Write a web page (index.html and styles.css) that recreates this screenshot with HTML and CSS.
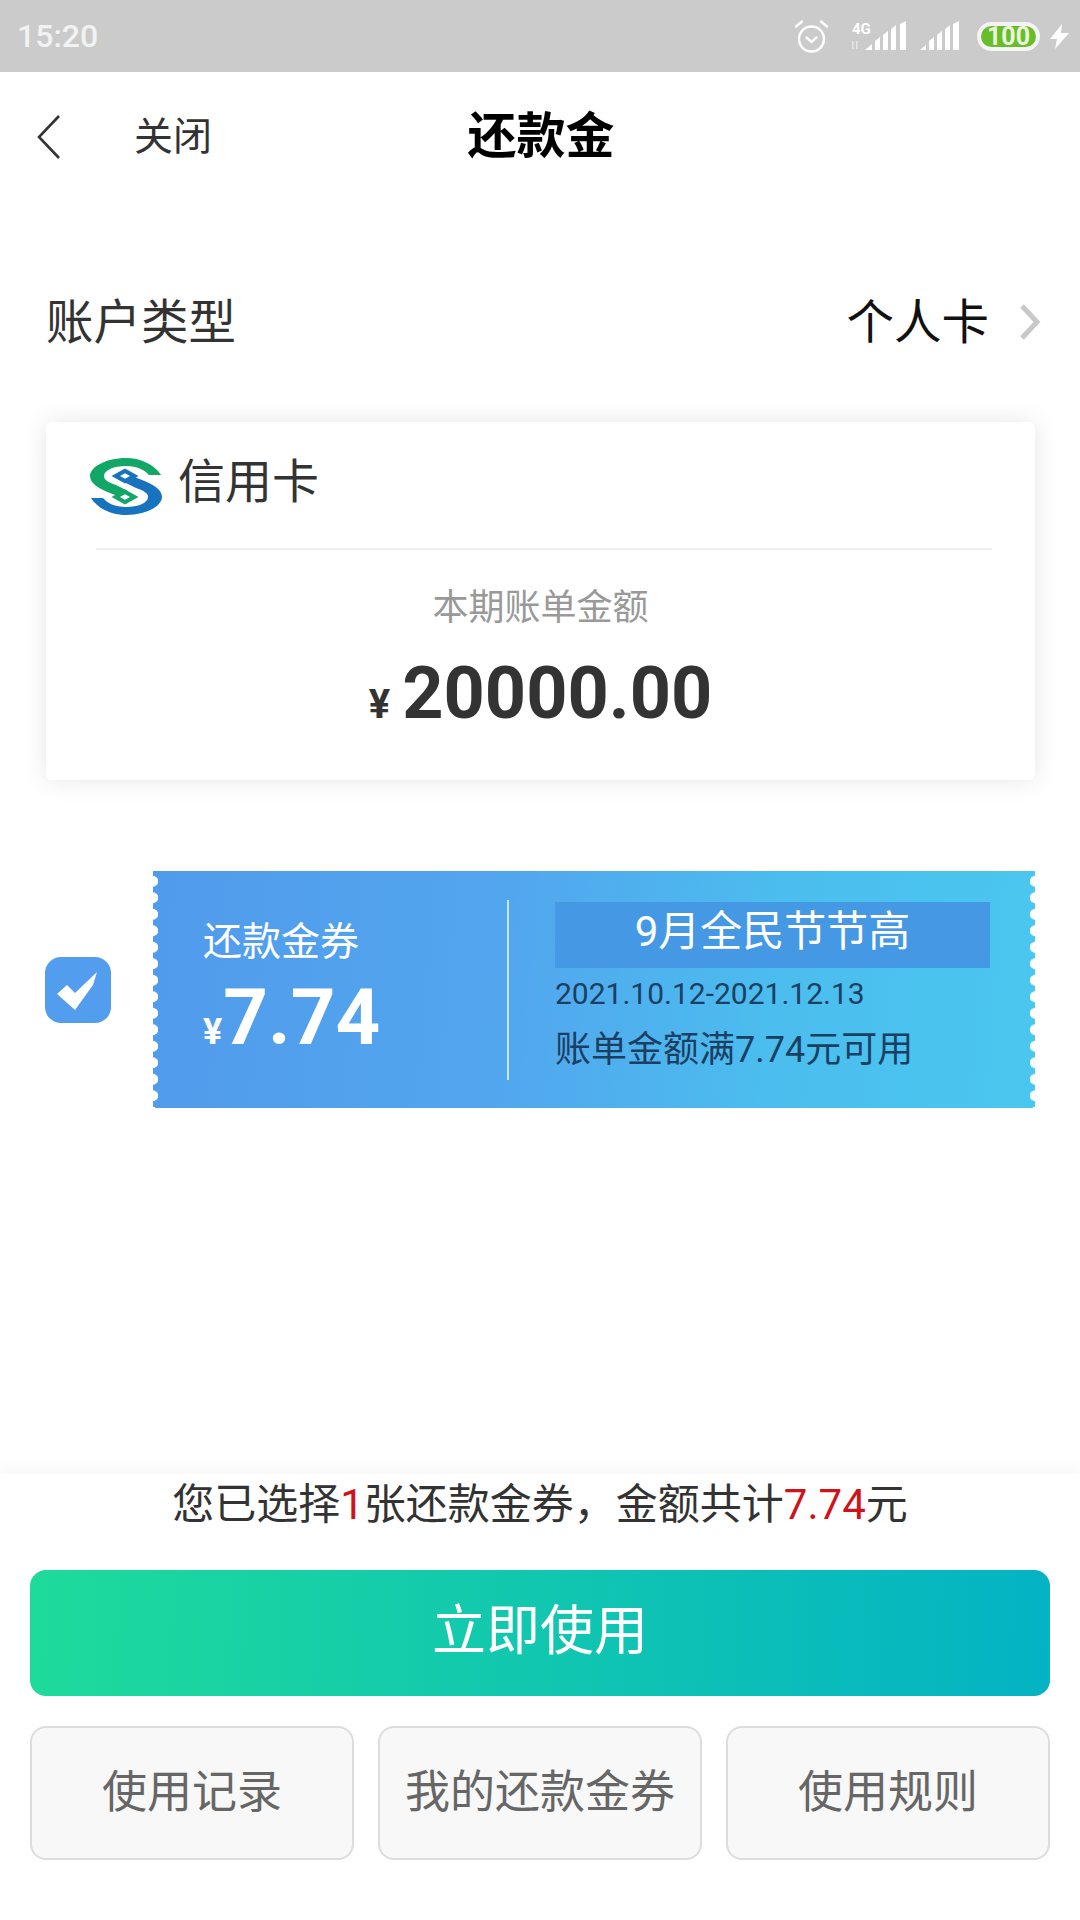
FILE: index.html
```html
<!DOCTYPE html>
<html lang="zh-CN">
<head>
  <meta charset="UTF-8">
  <meta name="viewport" content="width=device-width,initial-scale=1">
  <title>还款金</title>
  <link rel="stylesheet" href="styles.css">
</head>
<body>
  <div class="page">
    <!-- 状态栏 -->
    <div class="status">
      <span class="status-time">15:20</span>
      <div class="status-icons">
        <svg class="ic-alarm" width="35" height="35" viewBox="0 0 35 35" fill="none" stroke="#fff" stroke-width="2.4" stroke-linecap="round">
          <circle cx="17.5" cy="20" r="12.5"/>
          <path d="M12.5 18.5l5 4.5 5-4.5"/>
          <path d="M2 7.5 8 2.5M33 7.5l-6-5"/>
        </svg>
        <svg class="ic-sig4g" width="57" height="32" viewBox="0 0 57 32" fill="#fff">
          <text x="1" y="14" class="sig-label">4G</text>
          <rect x="1" y="21" width="1.6" height="8" opacity=".5"/>
          <rect x="5" y="21" width="1.6" height="8" opacity=".5"/>
          <path d="M14 30l7-6v6zM24 30V21l5-4v13zM32 30V15l5-4v19zM40 30V9l5-4v25zM49 30V4l6-3v29z"/>
        </svg>
        <svg class="ic-sig" width="40" height="30" viewBox="0 0 40 30" fill="#fff">
          <path d="M0 29l6-5v5zM9 29v-9l5-4v13zM17 29V14l5-4v19zM25 29V8l5-4v25zM33 29V3l6-3v29z"/>
        </svg>
        <div class="battery">100</div>
        <svg class="ic-bolt" width="19" height="25" viewBox="0 0 19 25" fill="#fff">
          <path d="M12 0 0 15h7l-2 10L19 9h-8z"/>
        </svg>
      </div>
    </div>

    <!-- 标题栏 -->
    <div class="nav">
      <svg class="nav-back" width="26" height="44" viewBox="0 0 26 44" fill="none" stroke="#333" stroke-width="2.6">
        <path d="M23 1 3 22l20 21"/>
      </svg>
      <span class="nav-close">关闭</span>
      <h1 class="nav-title">还款金</h1>
    </div>

    <div class="account">
      <span class="account-label">账户类型</span>
      <div class="account-value">
        <span>个人卡</span>
        <svg width="22" height="36" viewBox="0 0 22 36" fill="none" stroke="#c8c8c8" stroke-width="5">
          <path d="M3 2l15 16L3 34"/>
        </svg>
      </div>
    </div>

    <div class="card">
      <div class="card-head">
        <svg class="bank-logo" width="72" height="57" viewBox="0 0 72 57">
          <path fill="#12a667" d="M71 17C64 6 50 0 36 0 16 0 0 9 0 18c0 8 10 13 20 17l10 4 8-6-12-6c-8-3-12-5-12-9 0-6 10-10 22-10 11 0 19 4 23 9z"/>
          <path fill="#1773bd" d="M1 40c7 11 21 17 35 17 20 0 36-9 36-18 0-8-10-13-20-17l-10-4-8 6 12 6c8 3 12 5 12 9 0 6-10 10-22 10-11 0-19-4-23-9z"/>
          <path fill="#1773bd" d="M35 10.5 48.5 18 35 25.5 21.5 18z"/>
          <path fill="#fff" d="M35 15.2 40 18 35 20.8 30 18z"/>
          <path fill="#12a667" d="M35 31.5 48.5 39 35 46.5 21.5 39z"/>
          <path fill="#fff" d="M35 36.2 40 39 35 41.8 30 39z"/>
        </svg>
        <span class="bank-name">信用卡</span>
      </div>
      <div class="card-line"></div>
      <p class="bill-label">本期账单金额</p>
      <p class="bill-amount"><span class="yen">¥</span>20000.00</p>
    </div>

    <div class="coupon-row">
      <div class="check">
        <svg width="66" height="66" viewBox="0 0 66 66" fill="#fff">
          <path d="M12 37 22 28 30 36 52 15 48 28 30 53z"/>
        </svg>
      </div>
      <div class="coupon">
        <div class="coupon-left">
          <div class="coupon-name">还款金券</div>
          <div class="coupon-value"><span class="coupon-yen">¥</span>7.74</div>
        </div>
        <div class="coupon-sep"></div>
        <div class="coupon-right">
          <div class="coupon-banner">9月全民节节高</div>
          <div class="coupon-date">2021.10.12-2021.12.13</div>
          <div class="coupon-rule">账单金额满7.74元可用</div>
        </div>
      </div>
    </div>

    <div class="bottom">
      <p class="summary">您已选择<em>1</em>张还款金券，金额共计<em>7.74</em>元</p>
      <button class="btn-main">立即使用</button>
      <div class="btn-row">
        <button class="btn-sub">使用记录</button>
        <button class="btn-sub">我的还款金券</button>
        <button class="btn-sub">使用规则</button>
      </div>
    </div>
  </div>
</body>
</html>
```

FILE: styles.css
```css
* { box-sizing: border-box; }
html, body { margin: 0; padding: 0; background: #fff; }
body { font-family: Roboto, "Noto Sans CJK SC", sans-serif; color: #333; }
p, h1 { margin: 0; }
button { font-family: inherit; padding: 0; }

.page { width: 1080px; height: 1920px; display: flex; flex-direction: column; overflow: hidden; }

/* status bar */
.status { height: 72px; flex: none; background: #cbcbcb; display: flex; align-items: center; justify-content: space-between; padding: 0 11px 0 17px; }
.status-time { font-size: 32px; font-weight: 500; color: #f2f2f2; }
.status-icons { display: flex; align-items: center; }
.ic-alarm { margin-right: 22px; }
.ic-sig4g { margin-right: 12px; }
.ic-sig { margin-right: 17px; }
.sig-label { font-size: 15px; font-weight: 700; }
.battery { width: 63px; height: 29px; border: 4px solid #f4f4f4; border-radius: 15px; background: #69bd2b; color: #eaf6dc; font-size: 25px; font-weight: 700; line-height: 21px; text-align: center; margin-right: 10px; }

/* nav */
.nav { height: 130px; flex: none; position: relative; display: flex; align-items: center; padding-left: 36px; }
.nav-close { font-size: 39px; margin-left: 72px; margin-top: -8px; color: #333; }
.nav-title { position: absolute; left: 2px; right: 0; margin-top: -12px; text-align: center; font-size: 49px; font-weight: 700; color: #000; }

.account { height: 80px; margin-top: 80px; flex: none; display: flex; align-items: center; justify-content: space-between; padding: 0 39px 0 46px; font-size: 47.5px; }
.account-label { color: #333; margin-top: -8px; }
.account-value { display: flex; align-items: center; gap: 30px; color: #111; }
.account-value span { margin-top: -8px; }

/* card */
.card { margin: 60px 45px 0 46px; height: 358px; flex: none; background: #fff; border-radius: 6px; box-shadow: 0 0 26px rgba(0, 0, 0, .1); }
.card-head { height: 126px; display: flex; align-items: center; padding-left: 44px; gap: 16px; }
.bank-logo { margin-top: 2px; }
.bank-name { font-size: 47px; color: #333; margin-top: -16px; }
.card-line { height: 2px; background: #eee; margin: 0 43px 0 50px; }
.bill-label { margin-top: 33px; font-size: 36px; line-height: 50px; text-align: center; color: #999; }
.bill-amount { margin-top: 16px; font-size: 72px; line-height: 90px; font-weight: 700; text-align: center; color: #333; }
.yen { font-size: 40px; margin-right: 12px; }

/* coupon */
.coupon-row { margin-top: 91px; flex: none; display: flex; align-items: center; padding: 0 45px; }
.check { width: 66px; height: 66px; flex: none; border-radius: 16px; background: #529dee; }
.coupon { margin-left: 42px; width: 882px; height: 237px; display: flex; align-items: center; position: relative; color: #fff; background: linear-gradient(95deg, #519bec 0%, #52a6ee 40%, #4bbdee 70%, #4ac7ef 100%); }
.coupon::before, .coupon::after { content: ""; position: absolute; top: 0; bottom: 0; width: 5px; background-image: radial-gradient(circle at center, #fff 5px, transparent 5.5px); background-size: 10px 16.5px; }
.coupon::before { left: 0; background-position: -5px 2px; }
.coupon::after { right: 0; background-position: 0 2px; }
.coupon-left { width: 354px; padding: 14px 0 0 50px; flex: none; }
.coupon-name { font-size: 39px; line-height: 50px; }
.coupon-value { font-size: 78px; line-height: 90px; font-weight: 700; margin-top: 6px; }
.coupon-yen { font-size: 36px; margin-right: 1px; }
.coupon-sep { width: 2px; height: 180px; flex: none; background: rgba(255, 255, 255, .7); }
.coupon-right { padding: 0 0 4px 46px; }
.coupon-banner { width: 435px; height: 66px; background: #4598e4; font-size: 42px; line-height: 60px; text-align: center; }
.coupon-date { margin-top: 6px; font-size: 30px; line-height: 40px; color: #1b3f63; }
.coupon-rule { margin-top: 12px; font-size: 36px; line-height: 48px; color: #1b3f63; }

/* bottom */
.bottom { margin-top: auto; height: 446px; flex: none; padding: 0 30px; background: #fff; box-shadow: 0 -6px 16px rgba(0, 0, 0, .035); }
.summary { height: 96px; padding-top: 6px; font-size: 42px; line-height: 50px; text-align: center; color: #333; }
.summary em { font-style: normal; color: #d0121b; }
.btn-main { display: block; width: 100%; height: 126px; border: none; border-radius: 16px; padding-bottom: 14px; background: linear-gradient(92deg, #1edb9b 0%, #03b3c4 100%); color: #fff; font-size: 54px; }
.btn-row { margin-top: 30px; display: flex; gap: 24px; }
.btn-sub { flex: 1; height: 134px; border: 2px solid #ddd; border-radius: 16px; padding-bottom: 10px; background: #f8f8f8; color: #666; font-size: 45px; }
```
